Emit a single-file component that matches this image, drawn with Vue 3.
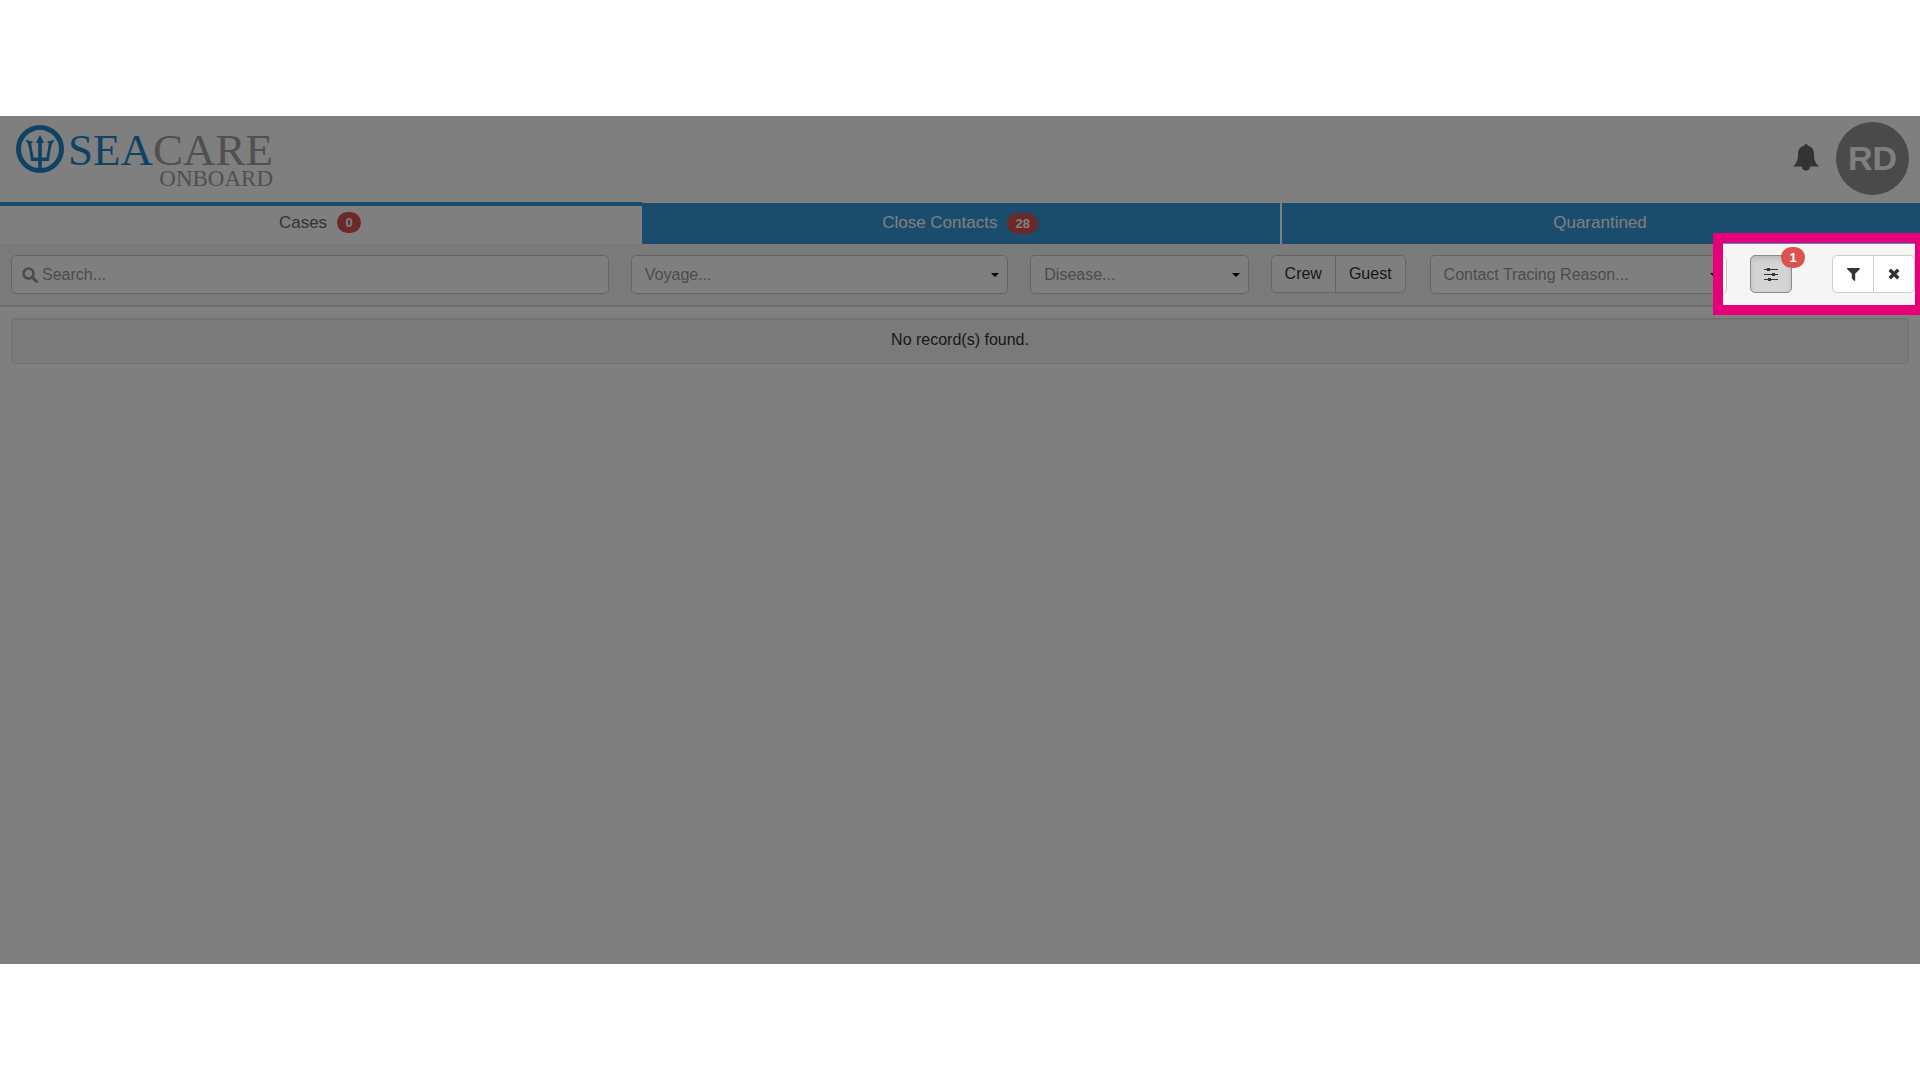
<script setup>
import { ref } from 'vue'

const tabs = [
  { name: 'Cases', count: '0' },
  { name: 'Close Contacts', count: '28' },
  { name: 'Quarantined', count: '' },
]
const active = ref('Cases')
const search = ref('')
</script>

<template>
  <div class="screen">
    <header class="top">
      <div class="brand">
        <svg class="mark" viewBox="0 0 48 48" aria-hidden="true">
          <circle cx="24" cy="24" r="21.5" fill="none" stroke="currentColor" stroke-width="5" />
          <path fill="currentColor" d="M24 10l4.200 8h-2.400V32.500h4.700L32.800 18.500l-2-1.800L39 14.500c-4.500 4.500-4.500 12-6 21.500h-7.200v10h-3.600V36H15C13.500 26.500 13.500 19 9 14.500l8.200 2.200-2 1.800L17.500 32.500h4.700V18h-2.400z" />
        </svg>
        <div class="words">
          <div class="name"><span class="sea">SEA</span>CARE</div>
          <div class="sub">ONBOARD</div>
        </div>
      </div>
      <div class="user">
        <button class="bell" aria-label="Notifications">
          <svg viewBox="0 0 26 27"><path fill="currentColor" d="M13 0c1 0 1.800.8 1.800 1.800 4.200.9 6.200 4 6.200 8.200 0 6 1.500 9.500 5 12.500H0C3.500 19.500 5 16 5 10c0-4.200 2-7.300 6.200-8.200C11.200.8 12 0 13 0zM9 22.500h8a4 4 0 0 1-8 0z" /></svg>
        </button>
        <button class="avatar">RD</button>
      </div>
    </header>

    <nav class="tabs">
      <button v-for="t in tabs" :key="t.name" class="tab" :class="{ on: active === t.name }" @click="active = t.name">
        {{ t.name }}<span v-if="t.count" class="badge">{{ t.count }}</span>
      </button>
    </nav>

    <form class="filters" @submit.prevent>
      <label class="search field">
        <svg viewBox="0 0 16 16" aria-hidden="true"><circle cx="6.500" cy="6.500" r="5" fill="none" stroke="currentColor" stroke-width="2.600" /><path d="M10 10l4.500 4.500" stroke="currentColor" stroke-width="3" stroke-linecap="round" /></svg>
        <input v-model="search" type="text" placeholder="Search..." aria-label="Search" />
      </label>
      <div class="pick voyage"><select class="field" aria-label="Voyage"><option>Voyage...</option></select></div>
      <div class="pick disease"><select class="field" aria-label="Disease"><option>Disease...</option></select></div>
      <div class="group people">
        <button class="btn">Crew</button><button class="btn">Guest</button>
      </div>
      <div class="pick reason"><select class="field" aria-label="Contact Tracing Reason"><option>Contact Tracing Reason...</option></select></div>
      <div class="more">
        <button class="btn pressed" aria-label="More filters">
          <svg width="14" height="13" viewBox="0 0 14 13"><path fill="currentColor" d="M0 1h3V0h3v1h8v1H6v1H3V2H0zM0 6h8V5h3v1h3v1h-3v1H8V7H0zM0 11h4v-1h3v1h7v1H7v1H4v-1H0z" /></svg>
        </button>
        <span class="badge count">1</span>
      </div>
      <div class="group actions">
        <button class="btn" aria-label="Apply filter"><svg width="13" height="13" viewBox="0 0 13 13"><path fill="currentColor" d="M.5 0h12q.8.500.2 1.200L8.200 5.800V12.500q-.4.700-1 .2L4.800 10.500V5.800L.3 1.200Q-.3.500.5 0z" /></svg></button>
        <button class="btn" aria-label="Clear filter"><svg width="12" height="12" viewBox="0 0 12 12"><path d="M1.700 1.700l8.600 8.600M10.300 1.700l-8.600 8.600" stroke="currentColor" stroke-width="3.400" /></svg></button>
      </div>
    </form>

    <main><p class="empty">No record(s) found.</p></main>
    <div class="spotlight"></div>
  </div>
</template>

<style>
body { background: #fff; }
</style>

<style scoped>
* { box-sizing: border-box; }
.screen {
  position: relative;
  margin: 116px 0;
  min-height: calc(100vh - 232px);
  overflow: hidden;
  background: #fff;
  font: 16px/22px "Liberation Sans", Arial, sans-serif;
  color: #333;
}
button, input, select { font: inherit; color: inherit; margin: 0; }
button { cursor: pointer; }
svg { display: block; flex: none; }
.top { display: flex; justify-content: space-between; height: 86px; padding: 6px 11px 0 16px; }
.brand { display: flex; gap: 4px; padding-top: 3px; color: #1c87cb; }
.mark { width: 48px; height: 48px; }
.words { font-family: "Liberation Serif", "Times New Roman", serif; color: #a0a0a0; }
.name { font-size: 45px; line-height: 51px; }
.sea { color: #1c87cb; }
.sub { margin-top: -7px; font-size: 23px; line-height: 20px; text-align: right; }
.user { display: flex; align-items: center; gap: 17px; height: 73px; }
.bell { border: 0; padding: 0 0 2px; background: none; color: #666; }
.bell svg { width: 26px; height: 27px; }
.avatar { width: 73px; height: 73px; padding: 0 0 2px; border: 0; border-radius: 50%; background: #949494; color: #fff; font-size: 34px; font-weight: bold; }
.tabs { display: grid; grid-template-columns: 642fr 638fr 640fr; height: 42px; }
.tab { display: flex; justify-content: center; align-items: center; gap: 10px; padding: 0 2px 1px 0; margin-top: 1px; border: 0; background: #3498db; color: #fff; font-size: 17px; }
.tab.on { margin-top: 0; padding-bottom: 5px; background: #fff; color: #666; border-top: 4px solid #3498db; }
.tab + .tab + .tab { border-left: 2px solid #fff; }
.badge { min-width: 24px; padding: 0 8px; border-radius: 11px; background: #d9534f; color: #fff; font-size: 13px; line-height: 21px; font-weight: bold; text-align: center; }
.filters { display: flex; align-items: flex-start; padding: 11px 5px 11px 11px; background: #f5f5f5; border-bottom: 2px solid #ddd; }
.field { height: 39px; border: 1px solid #ccc; border-radius: 5px; background: #fff; color: #999; }
.search { flex: 597 597 597px; display: flex; align-items: center; gap: 4px; padding: 0 10px; }
.search svg { width: 16px; height: 16px; }
.search input { flex: 1; min-width: 0; padding: 0; border: 0; outline: 0; background: none; }
.search input::placeholder { color: #999; opacity: 1; }
.pick { position: relative; margin-left: 22px; }
.pick .field { width: 100%; padding: 0 13px; appearance: none; }
.pick::after { content: ""; position: absolute; right: 9px; top: 18px; border: 4px solid transparent; border-top-color: #000; border-bottom: 0; }
.voyage { flex: 377 377 377px; }
.disease { flex: 218 218 218px; }
.reason { flex: 297 297 297px; }
.group { display: flex; }
.people { margin: 0 2px 0 22px; }
.btn { height: 38px; display: flex; align-items: center; justify-content: center; padding: 0 13px; border: 1px solid #ccc; border-radius: 5px; background: #fff; color: #333; }
.group .btn:first-child { border-radius: 5px 0 0 5px; }
.group .btn:last-child { border-radius: 0 5px 5px 0; margin-left: -1px; }
.more { position: relative; margin-left: 23px; }
.more .btn { width: 42px; padding: 0; }
.pressed { background: #d4d4d4; border-color: #8c8c8c; box-shadow: inset 0 3px 5px rgba(0, 0, 0, 0.125); }
.count { position: absolute; right: -13px; top: -8px; }
.actions { margin-left: 40px; }
.actions .btn { width: 42px; padding: 0; }
main { padding: 11px; }
.empty { margin: 0; padding: 10px 11px 12px; border: 1px solid #e3e3e3; border-radius: 4px; background: #f5f5f5; box-shadow: inset 0 1px 1px rgba(0, 0, 0, 0.05); text-align: center; }
.spotlight { position: absolute; top: 117px; right: -5px; width: 212px; height: 82px; border: 10px solid #e5007a; box-shadow: 0 0 0 3000px rgba(0, 0, 0, 0.5); pointer-events: none; }
</style>
